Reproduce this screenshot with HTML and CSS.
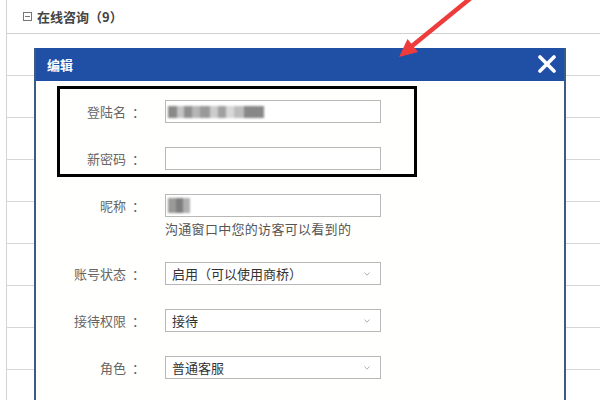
FILE: index.html
```html
<!DOCTYPE html>
<html lang="zh-CN">
<head>
  <meta charset="UTF-8">
  <title>在线咨询</title>
  <link rel="stylesheet" href="styles.css">
</head>
<body>
  <div class="page">
    <div class="panel">
      <div class="panel-head">
        <svg class="toggle" width="9" height="9" viewBox="0 0 9 9"><rect x="0.5" y="0.5" width="8" height="8" fill="none" stroke="#777"/><line x1="2" y1="4.5" x2="7" y2="4.5" stroke="#777"/></svg>
        <span>在线咨询（9）</span>
      </div>
      <div class="rows">
        <div class="row"></div>
        <div class="row"></div>
        <div class="row"></div>
        <div class="row"></div>
        <div class="row"></div>
        <div class="row"></div>
        <div class="row"></div>
        <div class="row"></div>
      </div>
    </div>

    <!-- Edit dialog -->
    <div class="dialog">
      <div class="dialog-title">
        <span>编辑</span>
        <svg class="close" width="18" height="18" viewBox="0 0 18 18"><path d="M2 2 L16 16 M16 2 L2 16" stroke="#fff" stroke-width="3.6" stroke-linecap="round"/></svg>
      </div>
      <div class="dialog-body">
        <div class="login-box">
          <div class="form-row">
            <label class="form-label">登陆名<span class="colon">：</span></label>
            <div class="form-field">
              <div class="input"><span class="blur blur-long"></span></div>
            </div>
          </div>
          <div class="form-row">
            <label class="form-label">新密码<span class="colon">：</span></label>
            <div class="form-field">
              <div class="input"></div>
            </div>
          </div>
        </div>

        <div class="form-list">
          <div class="form-row">
            <label class="form-label">昵称<span class="colon">：</span></label>
            <div class="form-field">
              <div class="input"><span class="blur blur-short"></span></div>
              <p class="hint">沟通窗口中您的访客可以看到的</p>
            </div>
          </div>
          <div class="form-row">
            <label class="form-label">账号状态<span class="colon">：</span></label>
            <div class="form-field">
              <div class="select">
                <span>启用（可以使用商桥）</span>
                <svg width="6" height="4" viewBox="0 0 6 4"><path d="M0.5 0.5 L3 3.2 L5.5 0.5" fill="none" stroke="#a8a8a8" stroke-width="0.9"/></svg>
              </div>
            </div>
          </div>
          <div class="form-row">
            <label class="form-label">接待权限<span class="colon">：</span></label>
            <div class="form-field">
              <div class="select">
                <span>接待</span>
                <svg width="6" height="4" viewBox="0 0 6 4"><path d="M0.5 0.5 L3 3.2 L5.5 0.5" fill="none" stroke="#a8a8a8" stroke-width="0.9"/></svg>
              </div>
            </div>
          </div>
          <div class="form-row">
            <label class="form-label">角色<span class="colon">：</span></label>
            <div class="form-field">
              <div class="select">
                <span>普通客服</span>
                <svg width="6" height="4" viewBox="0 0 6 4"><path d="M0.5 0.5 L3 3.2 L5.5 0.5" fill="none" stroke="#a8a8a8" stroke-width="0.9"/></svg>
              </div>
            </div>
          </div>
        </div>
      </div>
    </div>

    <!-- Red pointer arrow -->
    <svg class="arrow" width="90" height="65" viewBox="0 0 90 65">
      <line x1="82" y1="-3" x2="22" y2="46" stroke="#ee3b3b" stroke-width="4.5"/>
      <polygon points="9,57 28,52 17.5,39" fill="#ee3b3b"/>
    </svg>
  </div>
</body>
</html>
```

FILE: styles.css
```css
/* Page */
body {
  margin: 0;
  background: #fff;
  font-family: "Noto Sans CJK SC", "Noto Sans", sans-serif;
  font-size: 13px;
  color: #555;
}

.page {
  position: relative;
  width: 600px;
  height: 400px;
  overflow: hidden;
}

/* Background list */
.panel {
  margin-left: 6px;
  height: 400px;
  border-left: 1px solid #d4d4d4;
}

.panel-head {
  height: 34px;
  box-sizing: border-box;
  border-bottom: 1px solid #d0d0d0;
  display: flex;
  align-items: center;
  padding-left: 16px;
  font-weight: bold;
  color: #444;
}

.toggle {
  margin-right: 5px;
}

.row {
  height: 41px;
  border-bottom: 1px solid #d6d6d6;
}

/* Dialog */
.dialog {
  position: absolute;
  left: 34px;
  top: 48px;
  width: 532px;
  height: 370px;
  box-sizing: border-box;
  border-left: 2px solid #3b5b83;
  border-right: 2px solid #3b5b83;
  background: #fffffd;
}

.dialog-title {
  height: 33px;
  background: #2050a6;
  color: #fff;
  font-weight: bold;
  display: flex;
  align-items: center;
  justify-content: space-between;
  padding: 0 8px 0 11px;
}

.close {
  margin-top: -1px;
}

.login-box {
  margin: 5px 0 0 21px;
  width: 360px;
  box-sizing: border-box;
  border: 3px solid #000;
  padding: 11px 0 4px;
  display: flex;
  flex-direction: column;
  gap: 24px;
}

.form-list {
  margin: 17px 0 0 24px;
  display: flex;
  flex-direction: column;
  gap: 24px;
}

.form-row {
  display: flex;
  align-items: flex-start;
}

.form-label {
  width: 85px;
  margin-right: 20px;
  text-align: right;
  line-height: 23px;
  color: #666;
}

.colon {
  margin-left: 6px;
}

.form-field {
  width: 216px;
}

.input, .select {
  height: 23px;
  box-sizing: border-box;
  border: 1px solid #b8b8b8;
  background: #fff;
  display: flex;
  align-items: center;
}

.select {
  justify-content: space-between;
  padding: 0 10px 0 6px;
  color: #333;
}

.hint {
  margin: 3px 0 0;
  line-height: 18px;
  color: #555;
  letter-spacing: 0.3px;
}

/* Blurred private values */
.blur {
  display: block;
  margin-left: 2px;
  filter: blur(1px);
}

.blur-long {
  width: 96px;
  height: 12px;
  background: linear-gradient(90deg, #8a8a8a 0 9px, #c4c4c4 9px 16px, #8f8f8f 16px 24px, #b5b5b5 24px 32px, #999 32px 42px, #ccc 42px 50px, #a0a0a0 50px 58px, #d8d8d8 58px 66px, #bdbdbd 66px 76px, #888 76px 96px);
}

.blur-short {
  width: 22px;
  height: 15px;
  background: linear-gradient(90deg, #9a9a9a 0 8px, #7e7e7e 8px 15px, #b0b0b0 15px 22px);
}

/* Overlay arrow */
.arrow {
  position: absolute;
  left: 390px;
  top: 0;
}
```
